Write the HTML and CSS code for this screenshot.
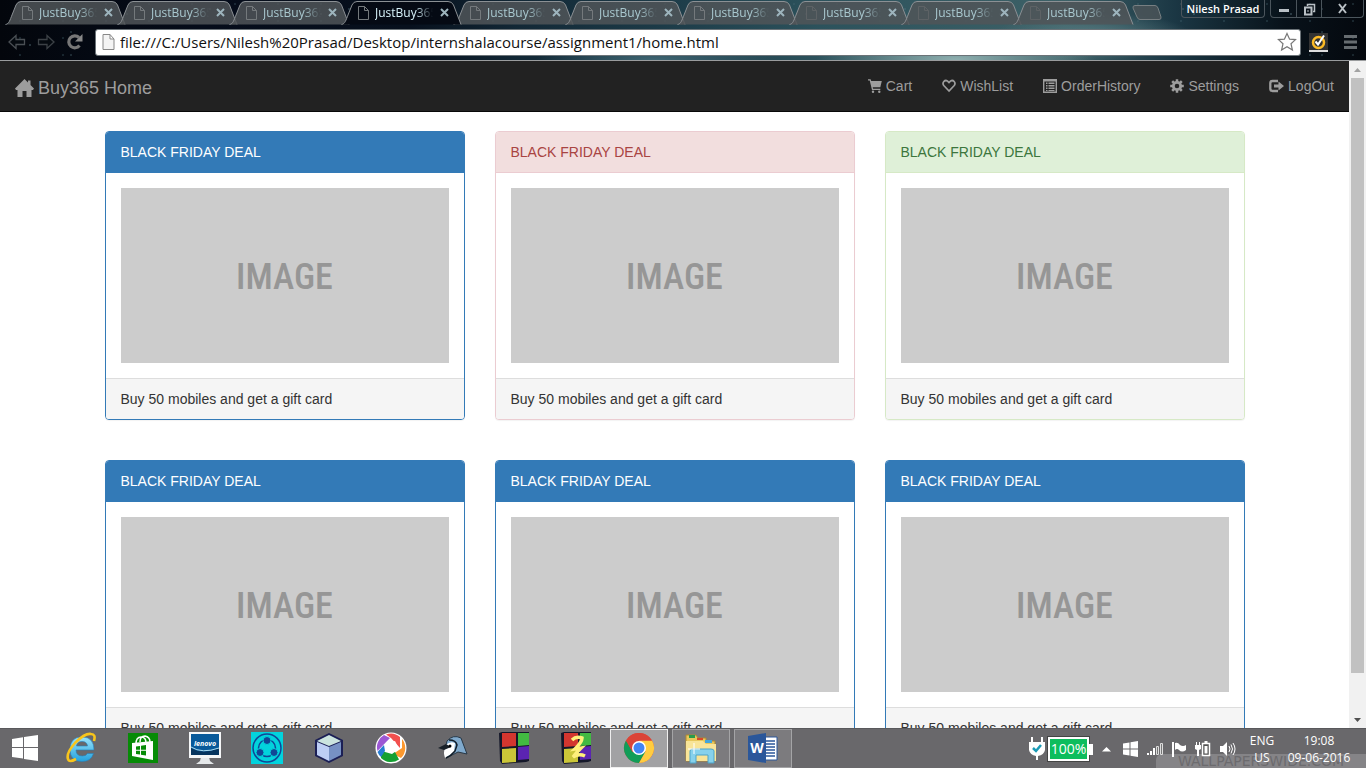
FILE: index.html
```html
<!DOCTYPE html>
<html lang="en">
<head>
<meta charset="utf-8">
<title>JustBuy365</title>
<link rel="stylesheet" href="styles.css">
</head>
<body>
<svg class="defs" aria-hidden="true">
  <symbol id="tab-shape" viewBox="0 0 125 25"><path class="tab-fill" d="M.5 24.5C4 24 5 20 7 15L11 5Q12.500 1.500 16 1.500H107Q111 1.500 112.500 5L120 24.500Z"/><path d="M.5 24.5C4 24 5 20 7 15L11 5Q12.500 1.500 16 1.500H107Q111 1.500 112.500 5L120 24.500" fill="none" stroke="#8b9094"/></symbol>
  <symbol id="page" viewBox="0 0 11 14"><path d="M.5.5H6.500L10.500 4.500V13.500H.5ZM6.500.5V4.500H10.500" /></symbol>
  <symbol id="close" viewBox="0 0 9 9"><path d="M1 1 8 8M8 1 1 8" fill="none" stroke="#9db4bd" stroke-width="2"/></symbol>
  <symbol id="heart" viewBox="0 0 14 14"><path d="M7 12 2 6.800C-.6 3.500 3 .2 5.600 2.200L7 3.600 8.400 2.200C11 .2 14.600 3.500 12 6.800Z" fill="none" stroke="currentColor" stroke-width="1.700"/></symbol>
</svg>

<header class="browser">
  <div class="tab-row">
    <div class="tabs">
      <div class="tab"><svg class="tab-bg"><use href="#tab-shape"/></svg><svg class="tab-icon"><use href="#page"/></svg><span class="tab-title">JustBuy365</span><button class="tab-close" aria-label="Close tab"><svg><use href="#close"/></svg></button></div>
      <div class="tab"><svg class="tab-bg"><use href="#tab-shape"/></svg><svg class="tab-icon"><use href="#page"/></svg><span class="tab-title">JustBuy365</span><button class="tab-close" aria-label="Close tab"><svg><use href="#close"/></svg></button></div>
      <div class="tab"><svg class="tab-bg"><use href="#tab-shape"/></svg><svg class="tab-icon"><use href="#page"/></svg><span class="tab-title">JustBuy365</span><button class="tab-close" aria-label="Close tab"><svg><use href="#close"/></svg></button></div>
      <div class="tab active"><svg class="tab-bg"><use href="#tab-shape"/></svg><svg class="tab-icon"><use href="#page"/></svg><span class="tab-title">JustBuy365</span><button class="tab-close" aria-label="Close tab"><svg><use href="#close"/></svg></button></div>
      <div class="tab"><svg class="tab-bg"><use href="#tab-shape"/></svg><svg class="tab-icon"><use href="#page"/></svg><span class="tab-title">JustBuy365</span><button class="tab-close" aria-label="Close tab"><svg><use href="#close"/></svg></button></div>
      <div class="tab"><svg class="tab-bg"><use href="#tab-shape"/></svg><svg class="tab-icon"><use href="#page"/></svg><span class="tab-title">JustBuy365</span><button class="tab-close" aria-label="Close tab"><svg><use href="#close"/></svg></button></div>
      <div class="tab"><svg class="tab-bg"><use href="#tab-shape"/></svg><svg class="tab-icon"><use href="#page"/></svg><span class="tab-title">JustBuy365</span><button class="tab-close" aria-label="Close tab"><svg><use href="#close"/></svg></button></div>
      <div class="tab"><svg class="tab-bg"><use href="#tab-shape"/></svg><svg class="tab-icon faint"><use href="#page"/></svg><span class="tab-title">JustBuy365</span><button class="tab-close" aria-label="Close tab"><svg><use href="#close"/></svg></button></div>
      <div class="tab"><svg class="tab-bg"><use href="#tab-shape"/></svg><svg class="tab-icon faint"><use href="#page"/></svg><span class="tab-title">JustBuy365</span><button class="tab-close" aria-label="Close tab"><svg><use href="#close"/></svg></button></div>
      <div class="tab"><svg class="tab-bg"><use href="#tab-shape"/></svg><svg class="tab-icon faint"><use href="#page"/></svg><span class="tab-title">JustBuy365</span><button class="tab-close" aria-label="Close tab"><svg><use href="#close"/></svg></button></div>
      <button class="new-tab" aria-label="New tab"><svg width="30" height="15" viewBox="0 0 30 15"><path d="M3 .5H23Q25 .5 26 3L29 12Q29.500 14.500 27 14.500H8Q6 14.500 5 12L1 3Q.5.5 3 .5Z" fill="#4d5559" fill-opacity=".8" stroke="#777f82"/></svg></button>
    </div>
    <button class="user">Nilesh Prasad</button>
    <div class="window-buttons">
      <button aria-label="Minimize"><svg width="12" height="14"><path d="M1 7H11V10H1Z" fill="#b9c0c5"/></svg></button>
      <button aria-label="Restore"><svg width="13" height="14" fill="none" stroke="#b9c0c5"><path d="M4.500 4V2.500H11.500V9.500H10" stroke-width="1.500"/><path d="M2 5.500H8.500V12.500H2Z" stroke-width="2"/><path d="M5 8V10"/></svg></button>
      <button class="wide" aria-label="Close"><svg width="10" height="12"><path d="M1 1 8 10M8 1 1 10" stroke="#b9c0c5" stroke-width="2"/></svg></button>
    </div>
  </div>
  <div class="toolbar">
    <button class="tool" aria-label="Back"><svg width="18" height="16"><path d="M1 8 8 1.500V5.500H16.500V10.500H8V14.500Z" fill="#050a10" stroke="#4a4f54" stroke-width="1.300"/></svg></button>
    <button class="tool" aria-label="Forward"><svg width="18" height="16"><path d="M17 8 10 1.500V5.500H1.500V10.500H10V14.500Z" fill="#050a10" stroke="#3c4146" stroke-width="1.300"/></svg></button>
    <button class="tool" aria-label="Reload"><svg width="18" height="18"><path d="M13.500 12.500A6 6 0 1 1 13 4.500" fill="none" stroke="#777" stroke-width="3.200"/><path d="M16.500 1V8.500H9Z" fill="#888"/></svg></button>
    <div class="address">
      <svg width="13" height="16" viewBox="0 0 13 16"><path d="M1 .5H8L12 5V15.500H1ZM8 .5V5H12" fill="#f4f4f4" stroke="#888"/></svg>
      <input class="url" aria-label="Address" value="file:///C:/Users/Nilesh%20Prasad/Desktop/internshalacourse/assignment1/home.html">
      <button class="tool star" aria-label="Bookmark"><svg width="20" height="20"><path d="M10 1.500 12.600 7.200 18.500 7.600 14 11.700 15.400 18 10 14.700 4.600 18 6 11.700 1.500 7.600 7.400 7.200Z" fill="#fff" stroke="#777" stroke-width="1.200"/></svg></button>
    </div>
    <button class="tool norton" aria-label="Norton"><svg width="19" height="19"><path d="M0 0H19V19H0Z" fill="#333"/><path d="M0 17H19V19H0Z" fill="#ddd"/><circle cx="9.500" cy="9.500" r="5.500" fill="none" stroke="#fdbb26" stroke-width="2.500"/><path d="M6.500 8.500 9 11.500 15 2.500" fill="none" stroke="#fff" stroke-width="2"/></svg></button>
    <button class="tool menu" aria-label="Menu"><svg width="15" height="16"><path d="M1 1H14V4H1ZM1 6.500H14V9.500H1ZM1 12H14V15H1Z" fill="#666c70"/></svg></button>
  </div>
</header>

<div class="viewport">
  <div class="page">
    <nav class="navbar">
      <a class="brand" href="#"><svg width="20" height="18" viewBox="0 0 20 18"><path d="M9.500 0 13 3.500V1.500H15.500V6L19 9.500 18 11H16.500V18H11.500V12H7.500V18H2.500V11H1L0 9.500Z" fill="currentColor"/></svg>Buy365 Home</a>
      <ul class="nav-links">
        <li><a href="#"><svg width="14" height="14"><path d="M0 .2H2.600L3.200 2H13.800L12.300 8.300H4.700L5.100 9.700H12.300V11H4L1.700 1.600H0Z" fill="currentColor"/><circle cx="5" cy="12.700" r="1.200" fill="currentColor"/><circle cx="11.300" cy="12.700" r="1.200" fill="currentColor"/></svg>Cart</a></li>
        <li><a href="#"><svg width="14" height="14"><use href="#heart"/></svg>WishList</a></li>
        <li><a href="#"><svg width="14" height="14"><path d="M.7.7H13.300V13.300H.7Z" fill="none" stroke="currentColor" stroke-width="1.400"/><path d="M.5.5H13.500V2.500H.5ZM3 3.500H4.500V5H3ZM3 6H4.500V7.500H3ZM3 8.500H4.500V10H3ZM3 11H4.500V12H3ZM5.500 3.500H11.500V5H5.500ZM5.500 6H11.500V7.500H5.500ZM5.500 8.500H11.500V10H5.500ZM5.500 11H11.500V12H5.500Z" fill="currentColor"/></svg>OrderHistory</a></li>
        <li><a href="#"><svg width="14" height="14" viewBox="-7 -7 14 14"><circle r="3.700" fill="none" stroke="currentColor" stroke-width="2.800"/><path d="M0-6.800V-4M0 6.800V4M-6.800 0H-4M6.800 0H4M-4.800-4.800-3-3M4.800 4.800 3 3M-4.800 4.800-3 3M4.800-4.800 3-3" stroke="currentColor" stroke-width="2.500"/></svg>Settings</a></li>
        <li><a href="#"><svg width="15" height="14"><path d="M9 2H3.500Q1.300 2 1.300 4.200V9.800Q1.300 12 3.500 12H9" fill="none" stroke="currentColor" stroke-width="2.300"/><path d="M5 5.500H9.500V2.500L15 7 9.500 11.500V8.500H5Z" fill="currentColor"/></svg>LogOut</a></li>
      </ul>
    </nav>
    <main class="deals">
      <article class="panel primary"><h2 class="panel-heading">BLACK FRIDAY DEAL</h2><div class="panel-body"><div class="placeholder">IMAGE</div></div><footer class="panel-footer">Buy 50 mobiles and get a gift card</footer></article>
      <article class="panel danger"><h2 class="panel-heading">BLACK FRIDAY DEAL</h2><div class="panel-body"><div class="placeholder">IMAGE</div></div><footer class="panel-footer">Buy 50 mobiles and get a gift card</footer></article>
      <article class="panel success"><h2 class="panel-heading">BLACK FRIDAY DEAL</h2><div class="panel-body"><div class="placeholder">IMAGE</div></div><footer class="panel-footer">Buy 50 mobiles and get a gift card</footer></article>
      <article class="panel primary"><h2 class="panel-heading">BLACK FRIDAY DEAL</h2><div class="panel-body"><div class="placeholder">IMAGE</div></div><footer class="panel-footer">Buy 50 mobiles and get a gift card</footer></article>
      <article class="panel primary"><h2 class="panel-heading">BLACK FRIDAY DEAL</h2><div class="panel-body"><div class="placeholder">IMAGE</div></div><footer class="panel-footer">Buy 50 mobiles and get a gift card</footer></article>
      <article class="panel primary"><h2 class="panel-heading">BLACK FRIDAY DEAL</h2><div class="panel-body"><div class="placeholder">IMAGE</div></div><footer class="panel-footer">Buy 50 mobiles and get a gift card</footer></article>
    </main>
  </div>
  <div class="scrollbar">
    <svg width="17" height="17"><path d="M8.500 7 12 11H5Z" fill="#a3a3a3"/></svg>
    <div class="track"><div class="thumb"></div></div>
    <svg width="17" height="17"><path d="M8.500 11 12 7H5Z" fill="#505050"/></svg>
  </div>
</div>

<footer class="taskbar">
  <button class="start" aria-label="Start"><svg width="28" height="28"><path d="M1 5 12 3.200V13H1ZM13 3 27 1V13H13ZM1 14H12V24.500L1 23ZM13 14H27V27L13 25Z" fill="#fff"/></svg></button>
  <div class="apps">
    <button class="app" aria-label="Internet Explorer"><svg width="32" height="32"><defs><linearGradient id="ie" x2="0" y2="1"><stop stop-color="#9be4fb"/><stop offset="1" stop-color="#23a1dd"/></linearGradient></defs><path d="M29 18H11Q11 24 17.500 24 21 24 22.500 21.500H28.500Q26 29.500 17 29.500 5 29.500 5 17.500 5 5 17 5 29 5 29 18ZM11.500 14H22.500Q22 9.500 17 9.500 12 9.500 11.500 14Z" fill="url(#ie)" stroke="#2380bb" stroke-width=".6" fill-rule="evenodd"/><path d="M29 9Q31 2 26 2 20 1 10 11 1 21 3 27 4 31 11 27" fill="none" stroke="#f8c51c" stroke-width="2.600"/></svg></button>
    <button class="app" aria-label="Store"><svg width="30" height="30"><path d="M0 0H30V30H0Z" fill="#068b06"/><path d="M4 10 25 8V27L4 23Z" fill="#fff"/><path d="M8 11Q8 4 13 4 18 4 18 10M12 9Q12 3 17 3 22 4 22 9" fill="none" stroke="#fff" stroke-width="1.500"/><path d="M8 13.500 12 13V16.700H8ZM13 12.800 18 12V16.700H13ZM8 17.700H12V21.500L8 21ZM13 17.700H18V22.500L13 21.700Z" fill="#068b06"/></svg></button>
    <button class="app" aria-label="Lenovo"><svg width="34" height="32"><path d="M13 25H21L22 29 26 32H8L12 29Z" fill="#e5e8ea"/><path d="M1 0H33V26H1Z" fill="#f5f6f7"/><path d="M3 2H31V23H3Z" fill="#08599a"/><path d="M3 16Q15 23 31 16V23H3Z" fill="#06345e"/><path d="M3 15Q14 22 31 16" fill="none" stroke="#aadbef"/><text x="17" y="14" text-anchor="middle" class="lenovo">lenovo</text></svg></button>
    <button class="app" aria-label="SHAREit"><svg width="32" height="32"><path d="M0 0H32V32H0Z" fill="#02d3dd"/><g fill="none" stroke="#114696" stroke-width="1.500"><circle cx="16" cy="16" r="14"/><circle cx="16" cy="16" r="8.500"/></g><g fill="#114696" stroke="#02d3dd"><circle cx="16" cy="8.500" r="4"/><circle cx="9" cy="20.500" r="4"/><circle cx="23" cy="20.500" r="4"/></g></svg></button>
    <button class="app" aria-label="NetBeans"><svg width="32" height="32"><path d="M16 1 30 8V24L16 31 2 24V8Z" fill="#1b1f55"/><path d="M16 3 28 9 16 14 4 9Z" fill="#cbe4df"/><path d="M4 10 16 15V29L4 23Z" fill="#bdcef5"/><path d="M28 10 16 15V29L28 23Z" fill="#7791c4"/></svg></button>
    <button class="app" aria-label="Picasa"><svg width="32" height="32"><circle cx="16" cy="16" r="15.500" fill="#fff"/><path d="M9 3A14 14 0 0 0 2.500 19L15 6Z" fill="#9c58d4"/><path d="M11 2.500A14 14 0 0 1 25 5V16L16 6Z" fill="#f2504e"/><path d="M27 7A14 14 0 0 1 26 26L18 22 27 16Z" fill="#fc982e"/><path d="M24 27.500A14 14 0 0 1 6 26V20H20Z" fill="#15a032"/><path d="M2.500 20A14 14 0 0 0 6 25L10 19 9 13Z" fill="#277cd2"/><path d="M11 11 20 9 24 17 17 22 10 20Z" fill="#fff"/></svg></button>
    <button class="app" aria-label="BlueJ"><svg width="32" height="32"><path d="M10 9Q16 2 24 6L30 22 21 20 9 26 8 17Z" fill="#7fa9cc" stroke="#283745"/><path d="M9 13Q13 9 18 11L17 20 8 26Q6 20 8 16Z" fill="#fff"/><path d="M1 16 9 12 14 15 7 18Z" fill="#182028"/><path d="M12 8Q19 8 20 13L18 19Q14 24 9 26" fill="none" stroke="#111c26" stroke-width="1.500"/><circle cx="13" cy="14" r="1.500"/></svg></button>
    <button class="app" aria-label="Blocks"><svg width="32" height="32"><path d="M0 1 3 0H30V29L27 30 3 32 1 29Z" fill="#15182a"/><path d="M3 1H17V14L3 15Z" fill="#d3362f"/><path d="M19 1H30V13L19 14Z" fill="#42ba42"/><path d="M3 17 17 16V30L3 31Z" fill="#cbc638"/><path d="M19 15 30 14V27L19 28Z" fill="#5b24b2"/></svg></button>
    <button class="app" aria-label="Blocks editor"><svg width="32" height="32"><path d="M0 1 3 0H30V29L27 30 3 32 1 29Z" fill="#15182a"/><path d="M3 1H17V14L3 15Z" fill="#d3362f"/><path d="M19 1H30V13L19 14Z" fill="#42ba42"/><path d="M3 17 17 16V30L3 31Z" fill="#cbc638"/><path d="M19 15 30 14V27L19 28Z" fill="#5b24b2"/><path d="M11 8Q15 4 21 6 21 10 14 17L20 16Q16 20 12 25 18 21 24 24" fill="none" stroke="#fff07b" stroke-width="3.500"/></svg></button>
    <button class="app open current" aria-label="Chrome"><svg width="32" height="32" viewBox="-16 -16 32 32"><circle r="15" fill="#db4437"/><path d="M-13-7.500A15 15 0 0 0 0 15L6.500 4-6.500 4Z" fill="#119d58"/><path d="M13-7.500A15 15 0 0 1 0 15L6.500 3.500 0-7.500Z" fill="#ffcd40"/><path d="M-13-7.500A15 15 0 0 1 13-7.500H0L-6.500 3.700Z" fill="#db4437"/><circle r="7" fill="#fff"/><circle r="5.500" fill="#4285f4"/></svg></button>
    <button class="app open" aria-label="File Explorer"><svg width="34" height="32"><path d="M2 3H12L14 6H22V9H31V29H2Z" fill="#e8c75b" stroke="#ad8834"/><path d="M5 3H11V6H5Z" fill="#299b4c"/><path d="M13 6H19V8H13Z" fill="#d8492a"/><path d="M21 8H28V11H21Z" fill="#42a5dc"/><path d="M2 9H19L22 12H32V29H2Z" fill="#f8e498"/><path d="M6 31V19Q6 17 9 17H27Q30 17 30 19V31H24V23H12V31Z" fill="#86d1ec" stroke="#4ca3c8"/><path d="M10 11V22M4 17H16" stroke="#fff"/></svg></button>
    <button class="app open" aria-label="Word"><svg width="32" height="32"><path d="M15 5H30V28H15Z" fill="#fff" stroke="#2b579a"/><path d="M18 9H28M18 12H28M18 15H28M18 18H28M18 21H28M18 24H28" stroke="#2b579a" stroke-width="1.300"/><path d="M1 4 19 1V31L1 28Z" fill="#2b579a"/><text x="10" y="21" text-anchor="middle" class="word">W</text></svg></button>
  </div>
  <div class="tray">
    <div class="watermark">WALLPAPERSWIDE.COM</div>
    <div class="power">
      <svg width="16" height="24"><path d="M2 0H4V5H12V0H14V5H16V13Q15 18 9 19V23H7V19Q1 18 0 13V5H2Z" fill="#fff"/><path d="M4 11 7 14 12 8" fill="none" stroke="#1b9bb6" stroke-width="2.500"/></svg>
      <span class="battery">100%</span>
    </div>
    <div class="tray-icons">
      <svg width="9" height="8"><path d="M0 6.500 4.500 2 9 6.500Z" fill="#fff"/></svg>
      <svg width="16" height="16"><path d="M0 2.500 6.500 1.500V7.500H0ZM7.500 1.300 15 0V7.500H7.500ZM0 8.500H6.500V14.500L0 13.500ZM7.500 8.500H15V16L7.500 14.700Z" fill="#fff"/></svg>
      <svg width="16" height="14"><path d="M0 11H2V13H0ZM3 9H5V13H3ZM6 6H8V13H6Z" fill="#fff"/><path d="M9.500 4.500H11.500V12.500H9.500ZM13.500 1.500H15.500V12.500H13.500Z" fill="#777" stroke="#ddd"/></svg>
      <svg width="16" height="16"><path d="M1 1H3V16H1ZM4 2Q7 1 9 4 12 6 15 4V9Q11 12 8 9 6 7 4 9Z" fill="#fff"/></svg>
      <svg width="16" height="16"><path d="M7.500 2.500H14.500V14.500H7.500Z" fill="#555" stroke="#fff" stroke-width="1.500"/><path d="M9.500 0H12.500V2H9.500ZM9.500 5H12.500V12.500H9.500ZM1 1H2V4H4V1H5V4H6V8L4 9V15H2V9L0 8V4H1Z" fill="#fff"/></svg>
      <svg width="18" height="16"><path d="M1 5H4L8 1V15L4 11H1Z" fill="#fff"/><path d="M10 5Q12 8 10 11M12 3.500Q15 8 12 12.500M14 2Q18 8 14 14" fill="none" stroke="#fff"/></svg>
    </div>
    <div class="lang"><span>ENG</span><span>US</span></div>
    <div class="clock"><time>19:08</time><span>09-06-2016</span></div>
  </div>
</footer>
</body>
</html>
```
FILE: styles.css
```css
* { box-sizing: border-box; }

html, body { height: 100%; }

body {
  margin: 0;
  display: flex;
  flex-direction: column;
  overflow: hidden;
  font: 14px/20px "Liberation Sans", Arial, sans-serif;
  color: #333;
  background: #fff;
}

button { padding: 0; border: 0; background: none; font: inherit; color: inherit; }
svg { display: block; flex: none; }
.defs { position: absolute; width: 0; height: 0; }

/* Browser frame */
.browser {
  flex: none;
  border-bottom: 1px solid #9a9c9e;
  font-family: "Open Sans", "Noto Sans", sans-serif;
  background:
    radial-gradient(circle at 30px 14px, #7a9ba5 0, transparent 1px) 0 0 / 97px 31px,
    radial-gradient(circle at 71px 9px, #587a85 0, transparent 1px) 0 0 / 139px 23px,
    radial-gradient(circle at 20px 4px, #486a76 0, transparent 1px) 0 0 / 43px 17px,
    radial-gradient(140px 30px at 70% 100%, #8fb0b0 0, transparent 100%),
    radial-gradient(100px 24px at 80% 60%, #55797f 0, transparent 100%),
    radial-gradient(120px 16px at 48% 100%, #3f6673 0, transparent 100%),
    linear-gradient(90deg, #03060c 0, #050c1a 15%, #07101d 30%, #122836 38%, #1c3a47 48%, #2c525c 60%, #3d6167 78%, #1b3744 86%, #08121a 94%, #04080e 100%);
}

.tab-row { display: flex; height: 25px; align-items: flex-start; }
.tabs { display: flex; flex: 1; min-width: 0; padding-left: 5px; }

.tab {
  position: relative;
  display: flex;
  align-items: center;
  width: 125px;
  height: 25px;
  margin-right: -13px;
  padding-left: 17px;
  flex: none;
  color: #a9c8cf;
}
.tab.active { z-index: 1; color: #d7f2fa; }
.tab-bg { position: absolute; inset: 0; width: 125px; height: 25px; fill: #505558; fill-opacity: .85; }
.tab.active .tab-bg { fill: #050a14; fill-opacity: 1; }
.tab-icon { position: relative; width: 11px; height: 14px; fill: none; stroke: #74797c; }
.tab-icon.faint { stroke: #5d6265; }
.tab-title {
  position: relative;
  width: 58px;
  margin-left: 6px;
  overflow: hidden;
  white-space: nowrap;
  font-size: 12px;
  line-height: 24px;
  mask-image: linear-gradient(90deg, #000 70%, transparent 100%);
}
.tab-close { position: relative; margin-left: 7px; }
.tab-close svg { width: 9px; height: 9px; }
.new-tab { align-self: center; margin-left: 7px; }

.user {
  width: 84px;
  height: 18px;
  border: 1px solid #4b555c;
  border-top: 0;
  border-radius: 0 0 4px 4px;
  color: #fff;
  font-size: 11px;
  font-weight: 600;
  line-height: 16px;
  white-space: nowrap;
}
.window-buttons {
  display: flex;
  height: 18px;
  margin: 0 2px 0 5px;
  border: 1px solid #4b555c;
  border-top: 0;
  border-radius: 0 0 4px 4px;
}
.window-buttons button { width: 25px; display: grid; place-items: center; }
.window-buttons button + button { border-left: 1px solid #4b555c; }
.window-buttons .wide { width: 42px; }

.toolbar { display: flex; align-items: center; height: 35px; padding: 0 8px 1px; gap: 11px; }
.tool { display: grid; place-items: center; flex: none; }
.address {
  display: flex;
  align-items: center;
  flex: 1;
  height: 27px;
  padding: 0 3px 0 6px;
  border: 1px solid #6b7378;
  border-radius: 3px;
  background: #fff;
}
.url {
  flex: 1;
  min-width: 0;
  padding: 0 5px;
  border: 0;
  outline: 0;
  background: none;
  color: #111;
  font: 15px/22px "Open Sans", "Noto Sans", sans-serif;
}
.norton { margin-left: -3px; }
.menu { margin-left: 4px; }

/* Visible page and its scroll bar */
.viewport { display: flex; flex: 1; min-height: 0; overflow: hidden; }
.page { flex: 1; min-width: 0; overflow: hidden; }
.scrollbar { display: flex; flex-direction: column; width: 17px; background: #f1f1f1; }
.track { flex: 1; padding: 0 2px; }
.thumb { height: 94%; background: #c1c1c1; }

.navbar {
  display: flex;
  justify-content: space-between;
  height: 51px;
  margin-bottom: 19px;
  border-bottom: 1px solid #080808;
  background: #222;
}
.navbar a { display: flex; align-items: center; gap: 4px; color: #9d9d9d; text-decoration: none; }
.navbar .brand { gap: 3px; padding: 3px 15px 0; font-size: 18px; }
.nav-links { display: flex; margin: 0; padding: 0; list-style: none; }
.nav-links a { height: 50px; padding: 0 15px; }

.deals {
  display: grid;
  grid-template-columns: repeat(3, 1fr);
  gap: 40px 30px;
  max-width: 1140px;
  margin: 0 auto;
}
.panel {
  overflow: hidden;
  border: 1px solid #337ab7;
  border-radius: 4px;
  background: #fff;
  box-shadow: 0 1px 1px rgba(0, 0, 0, .05);
}
.panel-heading {
  margin: 0;
  padding: 10px 15px;
  border-bottom: 1px solid #337ab7;
  background: #337ab7;
  color: #fff;
  font-size: 14px;
  font-weight: 400;
}
.danger, .danger .panel-heading { border-color: #ebccd1; }
.danger .panel-heading { background: #f2dede; color: #a94442; }
.success, .success .panel-heading { border-color: #d6e9c6; }
.success .panel-heading { background: #dff0d8; color: #3c763d; }
.panel-body { padding: 15px; }
.placeholder {
  display: grid;
  place-items: center;
  height: 175px;
  padding-top: 2px;
  background: #ccc;
  color: #969696;
  font: 500 36px/40px "Roboto Condensed", "Liberation Sans Narrow", "DejaVu Sans Condensed", sans-serif;
}
.panel-footer { padding: 10px 15px; border-top: 1px solid #ddd; background: #f5f5f5; }

/* Desktop task bar */
.taskbar {
  display: flex;
  justify-content: space-between;
  flex: none;
  height: 40px;
  border-top: 1px solid #59595c;
  background: #69686b;
  color: #fff;
  font: 12px/17px "Open Sans", "Noto Sans", sans-serif;
}
.start, .app { display: grid; place-items: center; padding-bottom: 2px; }
.start { width: 50px; }
.apps { display: flex; flex: 1; gap: 4px; padding-left: 2px; }
.app { width: 58px; }
.app.open { border: 1px solid #a4a4a6; background: #7c7b7e; }
.app.current { border-color: #eee; background: #a2a2a4; }
.lenovo { fill: #fff; font: italic 700 7px "Open Sans", sans-serif; }
.word { fill: #fff; font: 700 14px "Open Sans", sans-serif; }

.tray { position: relative; display: flex; align-items: center; }
.tray > :not(.watermark) { position: relative; }
.watermark {
  position: absolute;
  right: 0;
  bottom: 0;
  width: 210px;
  height: 14px;
  border-radius: 6px 0 0;
  background: #858487;
  color: #6c6b6e;
  font: 14px/14px "DejaVu Sans", sans-serif;
  text-align: center;
}
.power { display: flex; align-items: center; gap: 3px; }
.battery {
  position: relative;
  width: 41px;
  margin-right: 13px;
  border: 2px solid #fff;
  outline: 1px solid #444;
  background: #0dbd5d;
  font-size: 14px;
  line-height: 20px;
  text-align: center;
}
.battery::after { content: ""; position: absolute; right: -6px; top: 5px; width: 4px; height: 11px; background: #fff; }
.tray-icons { display: flex; align-items: center; gap: 8px; }
.tray-icons svg:first-child { margin-right: 4px; }
.lang, .clock { display: flex; flex-direction: column; text-align: center; }
.lang { width: 50px; }
.clock { width: 64px; margin-right: 15px; }
```
